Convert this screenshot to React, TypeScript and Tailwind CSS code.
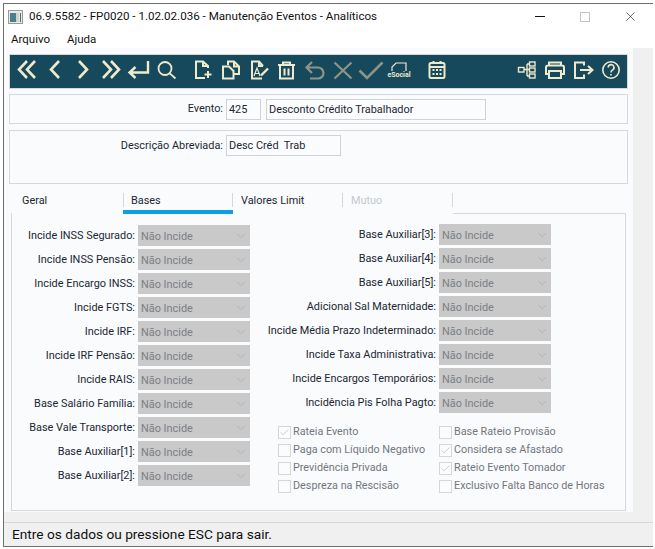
import React from 'react';
import { Check, ChevronDown, X } from 'lucide-react';

const leftRows = [
  'Incide INSS Segurado:',
  'Incide INSS Pensão:',
  'Incide Encargo INSS:',
  'Incide FGTS:',
  'Incide IRF:',
  'Incide IRF Pensão:',
  'Incide RAIS:',
  'Base Salário Família:',
  'Base Vale Transporte:',
  'Base Auxiliar[1]:',
  'Base Auxiliar[2]:',
];

const rightRows = [
  'Base Auxiliar[3]:',
  'Base Auxiliar[4]:',
  'Base Auxiliar[5]:',
  'Adicional Sal Maternidade:',
  'Incide Média Prazo Indeterminado:',
  'Incide Taxa Administrativa:',
  'Incide Encargos Temporários:',
  'Incidência Pis Folha Pagto:',
];

const checks = [
  { label: 'Rateia Evento', on: true },
  { label: 'Base Rateio Provisão', on: false },
  { label: 'Paga com Líquido Negativo', on: false },
  { label: 'Considera se Afastado', on: true },
  { label: 'Previdência Privada', on: false },
  { label: 'Rateio Evento Tomador', on: true },
  { label: 'Despreza na Rescisão', on: false },
  { label: 'Exclusivo Falta Banco de Horas', on: false },
];

const ON = '#efeacb';
const OFF = '#8f9488';

const SelectRow = ({ label, labelWidth }: { label: string; labelWidth: string }) => (
  <div className="flex h-[21px] items-center">
    <span className={`${labelWidth} whitespace-nowrap pr-[3px] pt-[2px] text-right text-[#1c2733]`}>{label}</span>
    <div className="flex h-[21px] w-[112px] items-center justify-between bg-[#c9c9c9] pl-[3px] pr-[2px] text-[#7b7f85]">
      <span className="pt-[3px]">Não Incide</span>
      <ChevronDown size={14} strokeWidth={1} className="text-[#a2a2a2]" />
    </div>
  </div>
);

const Tool = ({
  children,
  color = ON,
  sw = 2,
  className = '',
}: {
  children: React.ReactNode;
  color?: string;
  sw?: number;
  className?: string;
}) => (
  <svg
    width="28"
    height="28"
    viewBox="0 0 28 28"
    fill="none"
    stroke={color}
    strokeWidth={sw}
    className={`mb-[3px] shrink-0 ${className}`}
  >
    {children}
  </svg>
);

const Field = ({ value, className }: { value: string; className: string }) => (
  <div className={`flex h-[21px] items-center whitespace-pre border border-[#cfd2d6] bg-[#fbfcfe] pl-[2px] pt-[2px] text-[#1c2733] ${className}`}>
    {value}
  </div>
);

const Divider = () => <div className="mt-[3px] h-[14px] w-px bg-[#d6d8da]" />;

const App: React.FC = () => {
  return (
    <div
      className="h-[549px] w-[655px] bg-white pl-[3px] pr-[2px] pt-[3px] pb-[2px] text-[10.9px]"
      style={{ fontFamily: 'Roboto, sans-serif' }}
    >
      <div className="flex h-full flex-col border-l border-t border-b border-[#6e6e6e] bg-[#f0f0f0]">
        {/* title bar */}
        <div className="flex h-[25px] items-center bg-white pl-[4px] text-[11.6px] text-[#111]">
          <svg width="15" height="14" viewBox="0 0 15 14" className="mr-[6px]">
            <rect x="0.5" y="0.5" width="14" height="13" fill="#e8e8e8" stroke="#9a9a9a" />
            <rect x="2" y="3" width="6" height="9" fill="#4a7f8c" />
            <rect x="8" y="3" width="3" height="9" fill="#c8d8c8" />
            <rect x="12" y="3" width="1" height="9" fill="#5a6a7a" />
          </svg>
          <span className="whitespace-nowrap">06.9.5582 - FP0020 - 1.02.02.036 - Manutenção Eventos - Analíticos</span>
          <div className="ml-auto flex items-center">
            <div className="h-px w-[10px] bg-[#111]" />
            <div className="ml-[35px] h-[10px] w-[10px] border border-[#c4c4c4]" />
            <X size={15} strokeWidth={1} className="ml-[33px] mr-[15px] text-[#111]" />
          </div>
        </div>

        {/* menu */}
        <div className="flex h-[19px] items-center gap-[17px] bg-white pl-[7px] pt-[3px] text-[11.5px] text-[#111]">
          <span>Arquivo</span>
          <span>Ajuda</span>
        </div>

        <div className="flex flex-1 flex-col">
          <div className="mr-[20px] flex-1 bg-[#f9fbfd] px-[5px] pt-[6px]">
            {/* toolbar */}
            <div className="flex h-[35px] items-center border border-[#d6d8da] bg-[#17495c] pl-[3px] pr-[2px]">
              <Tool sw={2.6}><path d="M14 5L6 13.5L14 22M22 5L14 13.5L22 22" /></Tool>
              <Tool sw={2.6}><path d="M18 5L10 13.5L18 22" /></Tool>
              <Tool sw={2.6}><path d="M10 5L18 13.5L10 22" /></Tool>
              <Tool sw={2.6}><path d="M6 5L14 13.5L6 22M14 5L22 13.5L14 22" /></Tool>
              <Tool sw={2.4}><path d="M23 5V16.5H5M10.5 11L4.5 16.5L10.5 22" /></Tool>
              <Tool sw={1.8}>
                <circle cx="12" cy="12.5" r="6.5" />
                <path d="M16.8 17.3L22.5 22.5" />
              </Tool>
              <Tool className="ml-[8px]">
                <path d="M19 12V10L14 5.5H7V22H16M14 5.5V10H19M19 15V22M15.5 18.5H22.5" />
              </Tool>
              <Tool>
                <path d="M11 9V5.5H17L22 10.5V18H17M17 5.5V10.5H22" />
                <path d="M6 10.5H12L16.5 15V22.5H6Z" />
              </Tool>
              <Tool>
                <path d="M18 10L14 5.5H7V22.5H17M14 5.5V10H18" />
                <path d="M9 20L12 12L15 20M10.2 17.5H13.8" strokeWidth="1.2" />
                <path d="M16 19.5L23 12.5" strokeWidth="2.4" />
              </Tool>
              <Tool>
                <path d="M5 9H22M10 9V6.5H17V9M7 9V22.5H20V9M11.5 12.5V19.5M15.5 12.5V19.5" />
              </Tool>
              <Tool color={OFF} sw={2.2}>
                <path d="M6 11.5H17A5.5 5.5 0 0 1 17 22.5H9M11 6L5.5 11.5L11 17" />
              </Tool>
              <Tool color={OFF} sw={2.2}><path d="M5.5 6.5L22.5 22.5M22.5 6.5L5.5 22.5" /></Tool>
              <Tool color={OFF} sw={2.6}><path d="M2.5 14.5L10 22L25.5 6.5" /></Tool>
              <div className="mb-[3px] flex h-[28px] w-[28px] shrink-0 flex-col items-center justify-center leading-none">
                <svg width="16" height="10" viewBox="0 0 16 10" fill="none" stroke={ON} strokeWidth="1.2">
                  <path d="M1 9V5L5 1H15V9" />
                </svg>
                <span className="text-[7px] font-bold text-[#efeacb]">eSocial</span>
              </div>
              <Tool className="ml-[10px]">
                <rect x="6.5" y="7" width="15" height="15" rx="1.5" />
                <path d="M10.5 5V8M17.5 5V8M6.5 11H21.5" />
                <path d="M9.5 14H18.5M9.5 18H18.5" strokeWidth="2.2" strokeDasharray="2 1.5" />
              </Tool>
              <div className="ml-auto flex">
                <Tool sw={1.4}>
                  <rect x="5.5" y="11.5" width="5.5" height="4.5" />
                  <rect x="16.5" y="6" width="5.5" height="4" />
                  <rect x="16.5" y="12" width="5.5" height="4" />
                  <rect x="16.5" y="18" width="5.5" height="4" />
                  <path d="M11 13.5H16.5M14 8V20M14 8H16.5M14 20H16.5" />
                </Tool>
                <Tool>
                  <path d="M8 18H5V11.5A2 2 0 0 1 7 9.5H21A2 2 0 0 1 23 11.5V18H20M8 9.5V6.5H20V9.5" />
                  <rect x="8" y="15" width="12" height="7" />
                </Tool>
                <Tool>
                  <path d="M15 9.5V6.5H6V22H15V18.5M11 14H23M19 10L23.5 14L19 18" />
                </Tool>
                <Tool sw={1.6}>
                  <circle cx="14" cy="14" r="8.2" />
                  <path d="M11.2 11.5A2.9 2.9 0 1 1 15.4 14.1C14.4 14.7 14 15.2 14 16.5M14 18V19.6" />
                </Tool>
              </div>
            </div>

            {/* evento */}
            <div className="mt-[5px] flex h-[30px] items-center border border-[#d6d8da]">
              <span className="w-[216px] pr-[3px] text-right text-[#1c2733]">Evento:</span>
              <Field value="425" className="w-[35px]" />
              <Field value="Desconto Crédito Trabalhador" className="ml-[5px] w-[220px]" />
            </div>

            {/* descricao */}
            <div className="mt-[6px] flex h-[54px] items-start border border-[#d6d8da] pt-[4px]">
              <span className="w-[216px] whitespace-nowrap pr-[3px] pt-[3px] text-right text-[#1c2733]">Descrição Abreviada:</span>
              <Field value="Desc Créd  Trab" className="w-[115px]" />
            </div>

            {/* tabs */}
            <div className="relative z-10 mt-[6px] ml-[3px] flex h-[24px] w-[441px] bg-[#f9fbfd] text-[#1c2733]">
              <div className="w-[111px] pl-[10px] pt-[3px]">Geral</div>
              <Divider />
              <div className="w-[108px]">
                <div className="h-[20px] pl-[7px] pt-[3px]">Bases</div>
                <div className="-mx-px h-[4px] bg-[#0d9fe0]" />
              </div>
              <Divider />
              <div className="w-[109px] pl-[8px] pt-[3px]">Valores Limit</div>
              <Divider />
              <div className="w-[109px] pl-[8px] pt-[3px] text-[#c4c8cc]">Mutuo</div>
              <Divider />
            </div>

            {/* tab content */}
            <div className="mx-[2px] -mt-px h-[298px] border border-[#d6d8da] pt-[11px]">
              <div className="flex">
                <div className="flex w-[239px] flex-col gap-[3px]">
                  {leftRows.map((row) => (
                    <SelectRow key={row} label={row} labelWidth="w-[126px]" />
                  ))}
                </div>
                <div className="-mt-px flex flex-col">
                  <div className="flex flex-col gap-[3px]">
                    {rightRows.map((row) => (
                      <SelectRow key={row} label={row} labelWidth="w-[188px]" />
                    ))}
                  </div>
                  <div className="mt-[12px] grid grid-cols-[161px_1fr] gap-y-[3px] pl-[27px] text-[10.8px]">
                    {checks.map((c) => (
                      <label key={c.label} className="flex h-[15px] items-center whitespace-nowrap text-[#73777d]">
                        <span className="mr-[2px] flex h-[13px] w-[13px] items-center justify-center border border-[#d4d6d9] bg-[#fbfcfe]">
                          {c.on && <Check size={11} strokeWidth={1.2} className="text-[#a4a8ac]" />}
                        </span>
                        {c.label}
                      </label>
                    ))}
                  </div>
                </div>
              </div>
            </div>
          </div>

          {/* status bar */}
          <div className="mt-[10px] flex h-[24px] items-center border-t border-[#d6d8da] bg-[#f0f0f0] pl-[8px] text-[13.7px] text-[#111]">
            Entre os dados ou pressione ESC para sair.
          </div>
        </div>
      </div>
    </div>
  );
};

export default App;
